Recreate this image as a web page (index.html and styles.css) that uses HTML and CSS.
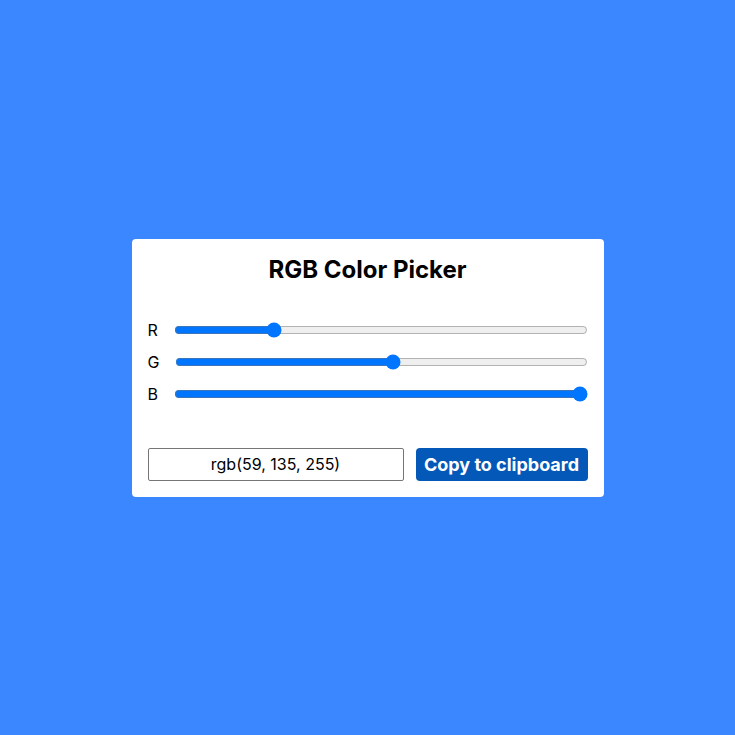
FILE: index.html
```html
<!DOCTYPE html>
<html>
<head>
<meta charset="utf-8">
<link rel="stylesheet" href="styles.css">
</head>
<body>
<div class="card">
  <h1 class="title">RGB Color Picker</h1>
  <div class="sliders">
    <div class="row"><label class="lbl">R</label><input class="range" type="range" min="0" max="255" value="59"></div>
    <div class="row"><label class="lbl">G</label><input class="range" type="range" min="0" max="255" value="135"></div>
    <div class="row"><label class="lbl">B</label><input class="range" type="range" min="0" max="255" value="255"></div>
  </div>
  <div class="output">
    <input class="value" type="text" value="rgb(59, 135, 255)" readonly>
    <button class="copy">Copy to clipboard</button>
  </div>
</div>
</body>
</html>
```
FILE: styles.css
```css
html, body {
  margin: 0;
  height: 100%;
}
body {
  background: #3b87ff;
  display: flex;
  align-items: center;
  justify-content: center;
  font-family: Inter, "Liberation Sans", sans-serif;
}
.card {
  width: 440px;
  background: #fff;
  border-radius: 4px;
  padding: 16px 16px 16px;
}
.title {
  margin: 0;
  font-size: 24px;
  line-height: 29px;
  font-weight: 700;
  text-align: center;
  color: #000;
}
.sliders {
  margin-top: 36px;
  display: flex;
  flex-direction: column;
  gap: 12px;
}
.row {
  display: flex;
  align-items: center;
  height: 20px;
}
.lbl {
  font-size: 16px;
  color: #000;
  margin-right: 14px;
}
.range {
  flex: 1;
  margin: 2px 0 2px 2px;
}
.output {
  margin-top: 44px;
  display: flex;
  gap: 12px;
}
.value {
  box-sizing: border-box;
  width: 256px;
  height: 33px;
  border: 1px solid #767676;
  border-radius: 2px;
  font-family: Inter, "Liberation Sans", sans-serif;
  font-size: 16px;
  text-align: center;
  color: #000;
  padding: 0;
}
.copy {
  flex: 1;
  height: 33px;
  background: #0358b8;
  color: #fff;
  border: none;
  border-radius: 4px;
  font-family: Inter, "Liberation Sans", sans-serif;
  font-size: 18px;
  font-weight: 700;
  padding: 0 8px;
}
```
